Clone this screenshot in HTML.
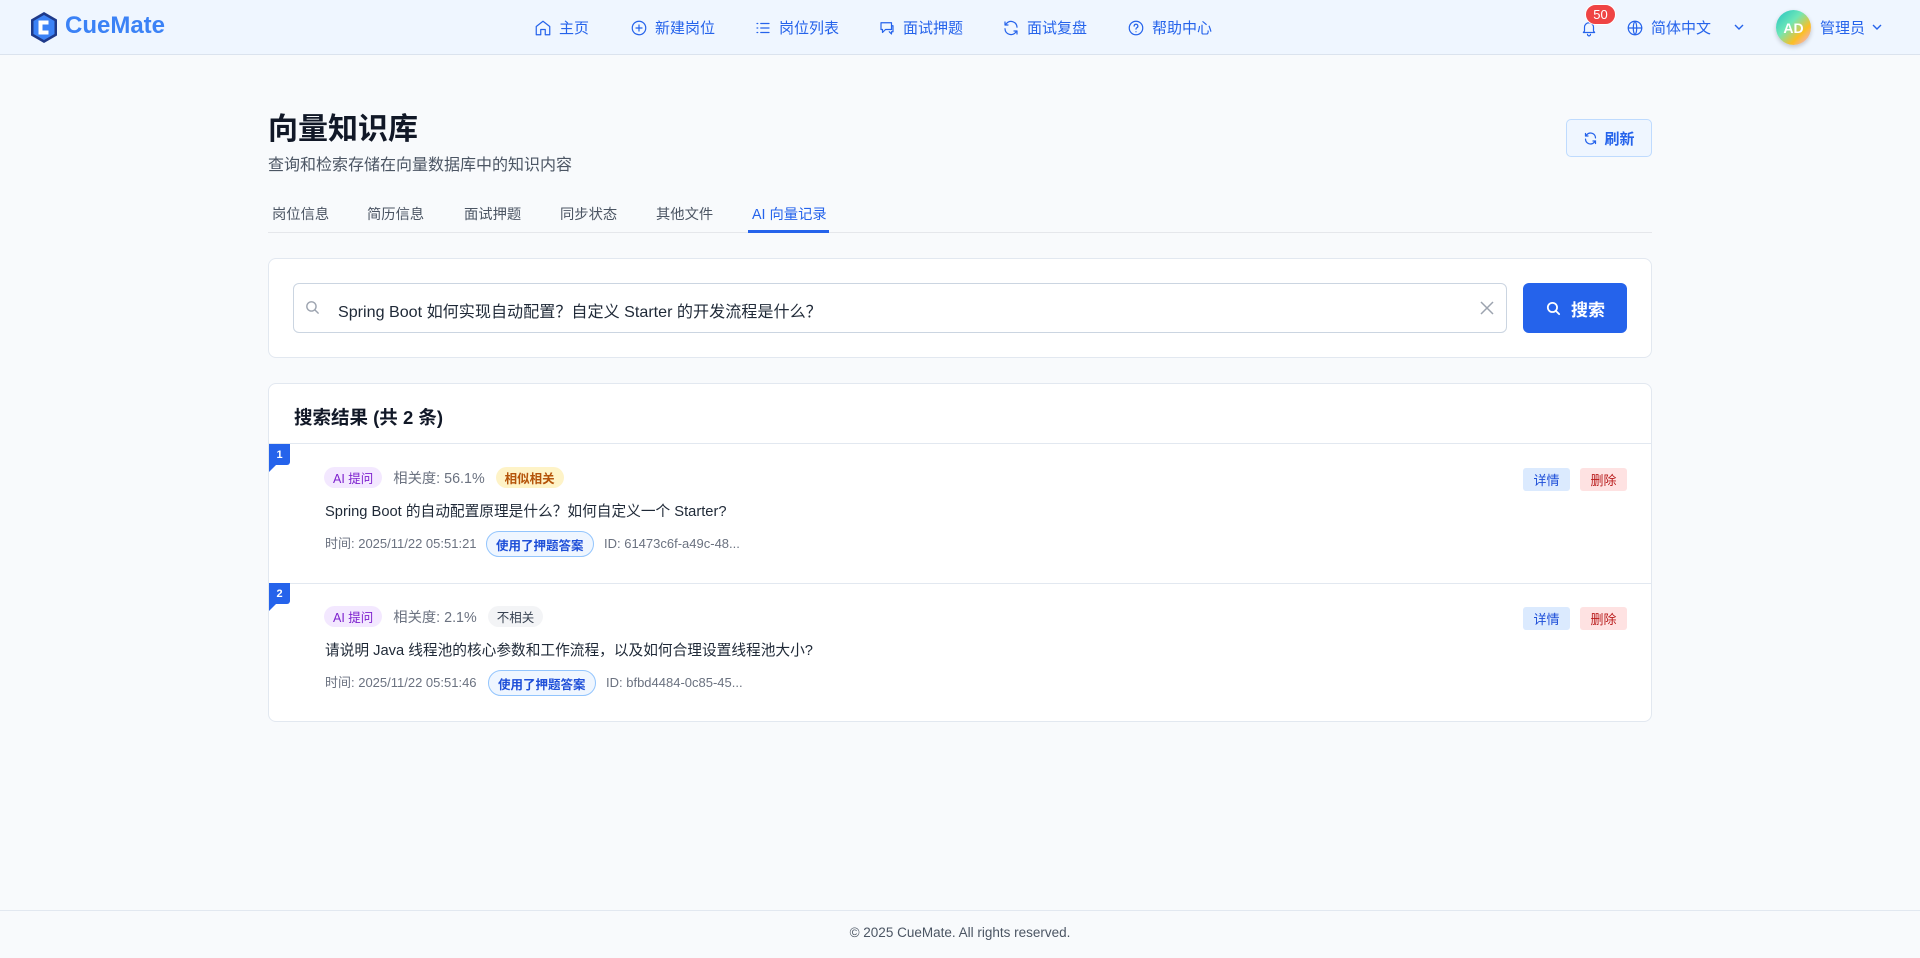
<!DOCTYPE html>
<html><head><meta charset="utf-8"><style>
*{box-sizing:border-box;margin:0;padding:0}
body{width:1920px;height:958px;background:#f8fafc;font-family:"Liberation Sans","Noto Sans CJK SC",sans-serif;color:#111827;position:relative;overflow:hidden}
.abs{position:absolute}
.hdr{left:0;top:0;width:1920px;height:55px;background:#eff6ff;border-bottom:1px solid #dbe3ee}
.nav{top:0;height:55px;display:flex;align-items:center;gap:7px;color:#2563eb;font-size:15px}
.nav svg{width:18px;height:18px;fill:none;stroke:#2563eb;stroke-width:1.6;stroke-linecap:round;stroke-linejoin:round}
.tab{top:203px;font-size:14.3px;color:#4b5563}
.card{background:#fff;border:1px solid #e2e8f0;border-radius:8px}
.tag{display:inline-flex;align-items:center;justify-content:center;border-radius:11px;font-size:12.5px;height:21px;padding:0 9px}
.meta{font-size:13px;color:#6b7280;line-height:26px}
</style></head><body>
<div class="abs hdr"></div>
<svg class="abs" style="left:29px;top:11px" width="30" height="33" viewBox="0 0 30 33"><polygon points="15,1 28,8.5 28,24.5 15,32 2,24.5 2,8.5" fill="#1e3a8a"/><polygon points="15,4 25.5,10 25.5,23 15,29 4.5,23 4.5,10" fill="#3b82f6"/><path d="M19.5 11.5H11.5V21.5H19.5" fill="none" stroke="#fff" stroke-width="4"/></svg>
<div class="abs" style="left:65px;top:12px;font-size:24px;font-weight:bold;color:#3b82f6">CueMate</div>

<div class="abs nav" style="left:534px"><svg viewBox="0 0 24 24"><path d="M3 10l9-7 9 7v11h-6v-7h-6v7H3z"/></svg>主页</div>
<div class="abs nav" style="left:630px"><svg viewBox="0 0 24 24"><circle cx="12" cy="12" r="9"/><path d="M12 8v8M8 12h8"/></svg>新建岗位</div>
<div class="abs nav" style="left:754px"><svg viewBox="0 0 24 24"><path d="M4 6h1M4 12h1M4 18h1M9 6h11M9 12h11M9 18h11"/></svg>岗位列表</div>
<div class="abs nav" style="left:878px"><svg viewBox="0 0 24 24"><path d="M4 5h14v9H10l-4 4v-4H4z"/><path d="M18 9h2v8h-2v3l-3-3"/></svg>面试押题</div>
<div class="abs nav" style="left:1002px"><svg viewBox="0 0 24 24"><path d="M20 11a8 8 0 0 0-14-5L4 8M4 4v4h4M4 13a8 8 0 0 0 14 5l2-2M20 20v-4h-4"/></svg>面试复盘</div>
<div class="abs nav" style="left:1127px"><svg viewBox="0 0 24 24"><circle cx="12" cy="12" r="9"/><path d="M9.5 9.5a2.5 2.5 0 1 1 3.5 2.3c-.7.3-1 .9-1 1.7M12 17h.01"/></svg>帮助中心</div>

<div class="abs nav" style="left:1580px"><svg viewBox="0 0 24 24"><path d="M6 16V11a6 6 0 0 1 12 0v5l1.5 2h-15zM10 20.5a2 2 0 0 0 4 0"/></svg></div>
<div class="abs" style="left:1585px;top:4px;width:31px;height:21px;border-radius:11px;background:#ef4444;border:1.5px solid #fff;color:#fff;font-size:13px;display:flex;align-items:center;justify-content:center">50</div>
<div class="abs nav" style="left:1626px"><svg viewBox="0 0 24 24"><circle cx="12" cy="12" r="9"/><path d="M3 12h18M12 3c3 3 3 15 0 18M12 3c-3 3-3 15 0 18"/></svg>简体中文</div>
<svg class="abs" style="left:1734px;top:24px" width="10" height="7" viewBox="0 0 10 7" fill="none" stroke="#2563eb" stroke-width="1.4"><path d="M1 1l4 4 4-4"/></svg>
<div class="abs" style="left:1776px;top:10px;width:35px;height:35px;border-radius:50%;background:linear-gradient(135deg,#22c1c3 0%,#6ee7b7 40%,#fbbf24 70%,#f0abfc 100%);box-shadow:0 2px 5px rgba(0,0,0,.2);color:#fff;font-weight:bold;font-size:14px;display:flex;align-items:center;justify-content:center">AD</div>
<div class="abs nav" style="left:1820px">管理员</div>
<svg class="abs" style="left:1872px;top:24px" width="10" height="7" viewBox="0 0 10 7" fill="none" stroke="#2563eb" stroke-width="1.4"><path d="M1 1l4 4 4-4"/></svg>

<div class="abs" style="left:268px;top:104px;font-size:30px;font-weight:bold;color:#111827">向量知识库</div>
<div class="abs" style="left:268px;top:151px;font-size:16px;color:#4b5563">查询和检索存储在向量数据库中的知识内容</div>
<div class="abs" style="left:1566px;top:119px;width:86px;height:38px;border:1px solid #bfdbfe;background:#eff6ff;border-radius:5px;display:flex;align-items:center;justify-content:center;gap:6px;color:#2563eb;font-size:15px;font-weight:bold"><svg width="15" height="15" viewBox="0 0 24 24" fill="none" stroke="#2563eb" stroke-width="2" stroke-linecap="round"><path d="M20 11a8 8 0 0 0-14-5L4 8M4 4v4h4M4 13a8 8 0 0 0 14 5l2-2M20 20v-4h-4"/></svg>刷新</div>

<div class="abs tab" style="left:272px">岗位信息</div>
<div class="abs tab" style="left:367px">简历信息</div>
<div class="abs tab" style="left:464px">面试押题</div>
<div class="abs tab" style="left:560px">同步状态</div>
<div class="abs tab" style="left:656px">其他文件</div>
<div class="abs tab" style="left:752px;color:#2563eb">AI 向量记录</div>
<div class="abs" style="left:268px;top:232px;width:1384px;height:1px;background:#e5e7eb"></div>
<div class="abs" style="left:748px;top:230px;width:81px;height:3px;background:#2563eb"></div>

<div class="abs card" style="left:268px;top:258px;width:1384px;height:100px"></div>
<div class="abs" style="left:293px;top:283px;width:1214px;height:50px;border:1px solid #cbd5e1;border-radius:6px;background:#fff"></div>
<svg class="abs" style="left:304px;top:299px" width="17" height="17" viewBox="0 0 24 24" fill="none" stroke="#9ca3af" stroke-width="2" stroke-linecap="round"><circle cx="10.5" cy="10.5" r="6.5"/><path d="M15.5 15.5L20 20"/></svg>
<div class="abs" style="left:338px;top:298px;font-size:16.1px;color:#1f2937">Spring Boot 如何实现自动配置？自定义 Starter 的开发流程是什么？</div>
<svg class="abs" style="left:1479px;top:300px" width="16" height="16" viewBox="0 0 16 16" stroke="#9ca3af" stroke-width="1.5"><path d="M2 2l12 12M14 2L2 14"/></svg>
<div class="abs" style="left:1523px;top:283px;width:104px;height:50px;background:#2563eb;border-radius:6px;color:#fff;display:flex;align-items:center;justify-content:center;gap:9px;font-size:17px;font-weight:bold"><svg width="17" height="17" viewBox="0 0 24 24" fill="none" stroke="#fff" stroke-width="2.5" stroke-linecap="round"><circle cx="10.5" cy="10.5" r="6.5"/><path d="M15.5 15.5L20 20"/></svg>搜索</div>

<div class="abs card" style="left:268px;top:383px;width:1384px;height:339px;overflow:hidden">
 <div class="abs" style="left:25px;top:20px;font-size:18.5px;font-weight:bold;color:#111827">搜索结果 (共 2 条)</div>
 <div class="abs" style="left:0;top:59px;width:1384px;height:1px;background:#e2e8f0"></div>
 <div class="abs" style="left:0;top:199px;width:1384px;height:1px;background:#e2e8f0"></div>
</div>

<!-- item 1 -->
<div class="abs" style="left:269px;top:444px;width:21px;height:21px;background:#2563eb;border-radius:0 0 3px 0;color:#fff;font-size:11px;font-weight:bold;display:flex;align-items:center;justify-content:center">1</div>
<div class="abs" style="left:269px;top:465px;width:0;height:0;border-top:7px solid #2563eb;border-right:7px solid transparent"></div>
<div class="abs" style="left:324px;top:467px;display:flex;align-items:center;gap:11px">
 <span class="tag" style="background:#f3e8ff;color:#7e22ce">AI 提问</span>
 <span style="font-size:14.3px;color:#6b7280">相关度: 56.1%</span>
 <span class="tag" style="background:#fef3c7;color:#b45309;font-weight:bold">相似相关</span>
</div>
<div class="abs" style="left:325px;top:500px;font-size:14.7px;color:#1f2937">Spring Boot 的自动配置原理是什么？如何自定义一个 Starter?</div>
<div class="abs meta" style="left:325px;top:531px">时间: 2025/11/22 05:51:21</div>
<div class="abs tag" style="left:486px;top:531px;height:26px;border-radius:13px;background:#eff6ff;border:1px solid #93c5fd;color:#1d4ed8;font-weight:bold">使用了押题答案</div>
<div class="abs meta" style="left:604px;top:531px">ID: 61473c6f-a49c-48...</div>
<div class="abs" style="left:1523px;top:468px;width:47px;height:23px;background:#dbeafe;border-radius:3px;color:#1d4ed8;font-size:13px;display:flex;align-items:center;justify-content:center">详情</div>
<div class="abs" style="left:1580px;top:468px;width:47px;height:23px;background:#fee2e2;border-radius:3px;color:#b91c1c;font-size:13px;display:flex;align-items:center;justify-content:center">删除</div>

<!-- item 2 -->
<div class="abs" style="left:269px;top:583px;width:21px;height:21px;background:#2563eb;border-radius:0 0 3px 0;color:#fff;font-size:11px;font-weight:bold;display:flex;align-items:center;justify-content:center">2</div>
<div class="abs" style="left:269px;top:604px;width:0;height:0;border-top:7px solid #2563eb;border-right:7px solid transparent"></div>
<div class="abs" style="left:324px;top:606px;display:flex;align-items:center;gap:11px">
 <span class="tag" style="background:#f3e8ff;color:#7e22ce">AI 提问</span>
 <span style="font-size:14.3px;color:#6b7280">相关度: 2.1%</span>
 <span class="tag" style="background:#f3f4f6;color:#374151">不相关</span>
</div>
<div class="abs" style="left:325px;top:639px;font-size:14.7px;color:#1f2937">请说明 Java 线程池的核心参数和工作流程，以及如何合理设置线程池大小?</div>
<div class="abs meta" style="left:325px;top:670px">时间: 2025/11/22 05:51:46</div>
<div class="abs tag" style="left:488px;top:670px;height:26px;border-radius:13px;background:#eff6ff;border:1px solid #93c5fd;color:#1d4ed8;font-weight:bold">使用了押题答案</div>
<div class="abs meta" style="left:606px;top:670px">ID: bfbd4484-0c85-45...</div>
<div class="abs" style="left:1523px;top:607px;width:47px;height:23px;background:#dbeafe;border-radius:3px;color:#1d4ed8;font-size:13px;display:flex;align-items:center;justify-content:center">详情</div>
<div class="abs" style="left:1580px;top:607px;width:47px;height:23px;background:#fee2e2;border-radius:3px;color:#b91c1c;font-size:13px;display:flex;align-items:center;justify-content:center">删除</div>

<div class="abs" style="left:0;top:910px;width:1920px;height:48px;border-top:1px solid #e2e8f0;background:#f8fafc"></div>
<div class="abs" style="left:0;top:925px;width:1920px;text-align:center;font-size:13.5px;color:#4b5563">© 2025 CueMate. All rights reserved.</div>
</body></html>
